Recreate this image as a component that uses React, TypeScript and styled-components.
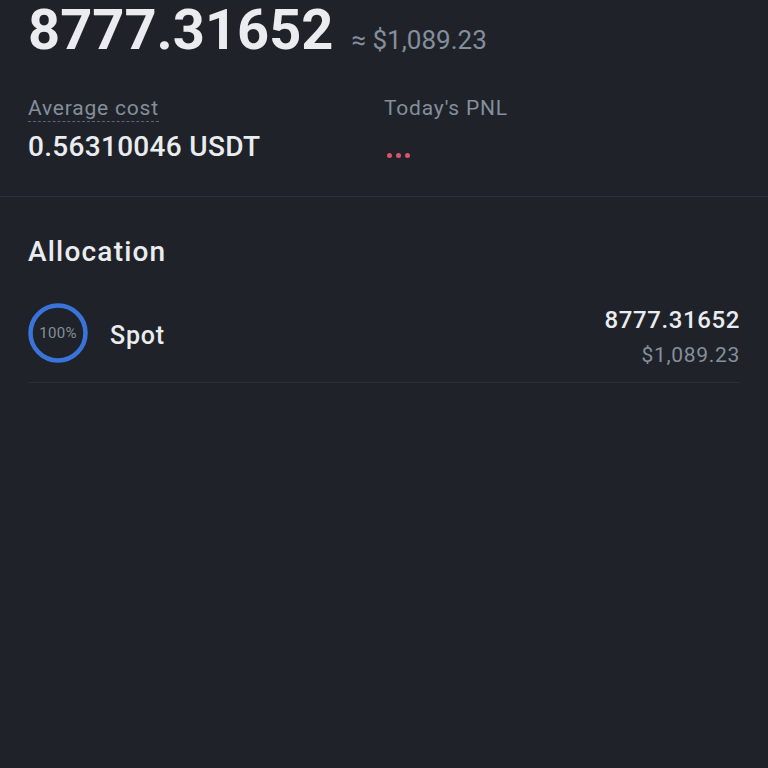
import React from "react";
import styled, { createGlobalStyle } from "styled-components";

const GlobalStyle = createGlobalStyle`
  html, body {
    margin: 0;
    padding: 0;
    background: #1f2329;
  }
  body {
    font-family: Roboto, "Noto Sans", "DejaVu Sans", sans-serif;
    color: #eaecef;
  }
`;

const Page = styled.div`
  width: 768px;
  min-height: 768px;
  background: #1f2329;
  overflow: hidden;
`;

const Summary = styled.section`
  padding: 0 28px;
  height: 197px;
  box-sizing: border-box;
  border-bottom: 1px solid #2e343c;
`;

const BalanceRow = styled.div`
  display: flex;
  align-items: baseline;
  gap: 18px;
`;

const Balance = styled.div`
  font-size: 56px;
  font-weight: 700;
  line-height: 60px;
  color: #eaecef;
`;

const Approx = styled.div`
  font-size: 26px;
  color: #848e9c;
`;

const Stats = styled.div`
  display: grid;
  grid-template-columns: 356px 1fr;
  margin-top: 35px;
`;

const Stat = styled.div`
  display: flex;
  flex-direction: column;
  gap: 9px;
`;

const Label = styled.span<{ $dotted?: boolean }>`
  align-self: flex-start;
  font-size: 21px;
  line-height: 26px;
  letter-spacing: 0.8px;
  color: #848e9c;
  border-bottom: 1px dashed ${(p) => (p.$dotted ? "#5e6673" : "transparent")};
`;

const Value = styled.span`
  font-size: 28px;
  font-weight: 500;
  line-height: 32px;
  letter-spacing: 0.3px;
  color: #eaecef;
`;

const Dots = styled.span`
  display: flex;
  gap: 4px;
  padding: 22px 0 0 3px;
`;

const Dot = styled.i`
  width: 5px;
  height: 5px;
  border-radius: 50%;
  background: #d9536a;
`;

const Allocation = styled.section`
  padding: 39px 28px 0;
`;

const Title = styled.h2`
  margin: 0;
  font-size: 28px;
  font-weight: 500;
  line-height: 32px;
  letter-spacing: 1.2px;
  color: #eaecef;
`;

const Row = styled.div`
  display: flex;
  align-items: center;
  justify-content: space-between;
  margin-top: 31px;
  padding-bottom: 15px;
  border-bottom: 1px solid #2a2f36;
`;

const RowLeft = styled.div`
  display: flex;
  align-items: center;
  gap: 22px;
`;

const Ring = styled.div`
  position: relative;
  width: 60px;
  height: 60px;
  display: flex;
  align-items: center;
  justify-content: center;
`;

const RingSvg = styled.svg`
  position: absolute;
  inset: 0;
`;

const RingText = styled.span`
  position: relative;
  font-size: 15px;
  color: #848e9c;
  letter-spacing: 0.3px;
`;

const RowName = styled.span`
  font-size: 25px;
  font-weight: 500;
  letter-spacing: 0.8px;
  padding-top: 4px;
  color: #eaecef;
`;

const RowRight = styled.div`
  display: flex;
  flex-direction: column;
  align-items: flex-end;
  gap: 9px;
  padding-top: 7px;
`;

const RowAmount = styled.span`
  font-size: 24px;
  font-weight: 500;
  line-height: 28px;
  letter-spacing: 0.6px;
  color: #eaecef;
`;

const RowFiat = styled.span`
  font-size: 21px;
  line-height: 24px;
  letter-spacing: 0.7px;
  color: #848e9c;
`;

export default function App() {
  return (
    <Page>
      <GlobalStyle />
      <Summary>
        <BalanceRow>
          <Balance>8777.31652</Balance>
          <Approx>≈ $1,089.23</Approx>
        </BalanceRow>
        <Stats>
          <Stat>
            <Label $dotted>Average cost</Label>
            <Value>0.56310046 USDT</Value>
          </Stat>
          <Stat>
            <Label>Today's PNL</Label>
            <Dots>
              <Dot />
              <Dot />
              <Dot />
            </Dots>
          </Stat>
        </Stats>
      </Summary>
      <Allocation>
        <Title>Allocation</Title>
        <Row>
          <RowLeft>
            <Ring>
              <RingSvg width="60" height="60" viewBox="0 0 60 60">
                <circle cx="30" cy="30" r="27.5" fill="none" stroke="#3a74db" strokeWidth="4.5" />
              </RingSvg>
              <RingText>100%</RingText>
            </Ring>
            <RowName>Spot</RowName>
          </RowLeft>
          <RowRight>
            <RowAmount>8777.31652</RowAmount>
            <RowFiat>$1,089.23</RowFiat>
          </RowRight>
        </Row>
      </Allocation>
    </Page>
  );
}
